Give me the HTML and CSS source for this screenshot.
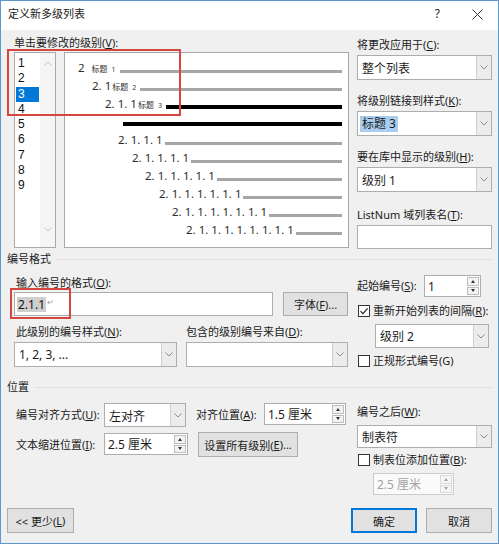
FILE: index.html
```html
<!DOCTYPE html>
<html lang="zh-CN">
<head>
<meta charset="utf-8">
<title>定义新多级列表</title>
<link rel="stylesheet" href="styles.css">
</head>
<body>
<div class="win">
  <div class="titlebar">
    <span class="title">定义新多级列表</span>
    <span class="help">?</span>
    <svg class="close" width="11" height="11" viewBox="0 0 11 11"><path d="M0.5 0.5L10.5 10.5M10.5 0.5L0.5 10.5" stroke="#333" stroke-width="1" fill="none"/></svg>
  </div>

  <div class="top">
    <div class="top-left">
      <div class="lbl">单击要修改的级别(<u>V</u>):</div>
      <div class="lists">
        <div class="levels">
          <div class="lv-items">
            <div class="lv">1</div>
            <div class="lv">2</div>
            <div class="lv sel">3</div>
            <div class="lv">4</div>
            <div class="lv">5</div>
            <div class="lv">6</div>
            <div class="lv">7</div>
            <div class="lv">8</div>
            <div class="lv">9</div>
          </div>
          <div class="lv-scroll">
            <svg width="8" height="5" viewBox="0 0 8 5"><path d="M0.5 4.5L4 1L7.5 4.5" fill="none" stroke="#c2c2c2"/></svg>
            <svg width="8" height="5" viewBox="0 0 8 5"><path d="M0.5 0.5L4 4L7.5 0.5" fill="none" stroke="#c2c2c2"/></svg>
          </div>
        </div>
        <div class="preview">
          <div class="row r1"><span class="num">2</span><span class="hl first">标题<span class="hn">1</span></span><span class="ln"></span></div>
          <div class="row r2"><span class="num">2. 1</span><span class="hl">标题<span class="hn">2</span></span><span class="ln"></span></div>
          <div class="row r3"><span class="num">2. 1. 1</span><span class="hl">标题<span class="hn">3</span></span><span class="ln blk"></span></div>
          <div class="row r4"><span class="ln blk"></span></div>
          <div class="row r5"><span class="num">2. 1. 1. 1</span><span class="ln tight"></span></div>
          <div class="row r6"><span class="num">2. 1. 1. 1. 1</span><span class="ln tight"></span></div>
          <div class="row r7"><span class="num">2. 1. 1. 1. 1. 1</span><span class="ln tight"></span></div>
          <div class="row r8"><span class="num">2. 1. 1. 1. 1. 1. 1</span><span class="ln tight"></span></div>
          <div class="row r9"><span class="num">2. 1. 1. 1. 1. 1. 1. 1</span><span class="ln tight"></span></div>
          <div class="row r10"><span class="num">2. 1. 1. 1. 1. 1. 1. 1. 1</span><span class="ln tight"></span></div>
        </div>
      </div>
    </div>

    <div class="top-right">
      <div class="rfield f1">
        <div class="lbl">将更改应用于(<u>C</u>):</div>
        <div class="dd h25"><span class="dd-text">整个列表</span><span class="dd-btn"><svg width="8" height="5" viewBox="0 0 8 5"><path d="M0.5 0.5L4 4L7.5 0.5" fill="none" stroke="#8a8a8a"/></svg></span></div>
      </div>
      <div class="rfield f2">
        <div class="lbl">将级别链接到样式(<u>K</u>):</div>
        <div class="dd h25"><span class="dd-text"><span class="hilite">标题 3</span></span><span class="dd-btn"><svg width="8" height="5" viewBox="0 0 8 5"><path d="M0.5 0.5L4 4L7.5 0.5" fill="none" stroke="#8a8a8a"/></svg></span></div>
      </div>
      <div class="rfield f3">
        <div class="lbl">要在库中显示的级别(<u>H</u>):</div>
        <div class="dd h25"><span class="dd-text">级别 1</span><span class="dd-btn"><svg width="8" height="5" viewBox="0 0 8 5"><path d="M0.5 0.5L4 4L7.5 0.5" fill="none" stroke="#8a8a8a"/></svg></span></div>
      </div>
      <div class="rfield f4">
        <div class="lbl">ListNum 域列表名(<u>T</u>):</div>
        <div class="txt h24"></div>
      </div>
    </div>
  </div>

  <div class="gtitle g1">编号格式</div>
  <div class="fmt">
    <div class="fmt-left">
      <div class="lbl lbl-a">输入编号的格式(<u>O</u>):</div>
      <div class="inrow">
        <div class="txt fmtinput"><span class="field">2.1.1</span><span class="para">↵</span></div>
        <div class="btn btn-font">字体(<u>F</u>)...</div>
      </div>
      <div class="lblrow">
        <div class="lbl lbl-n">此级别的编号样式(<u>N</u>):</div>
        <div class="lbl">包含的级别编号来自(<u>D</u>):</div>
      </div>
      <div class="selrow">
        <div class="dd sel-n"><span class="dd-text">1, 2, 3, ...</span><span class="dd-btn"><svg width="8" height="5" viewBox="0 0 8 5"><path d="M0.5 0.5L4 4L7.5 0.5" fill="none" stroke="#8a8a8a"/></svg></span></div>
        <div class="dd sel-d"><span class="dd-text"></span><span class="dd-btn"><svg width="8" height="5" viewBox="0 0 8 5"><path d="M0.5 0.5L4 4L7.5 0.5" fill="none" stroke="#8a8a8a"/></svg></span></div>
      </div>
    </div>
    <div class="fmt-right">
      <div class="startrow">
        <span class="lbl start-lbl">起始编号(<u>S</u>):</span>
        <div class="spin start-spin"><span class="spin-text">1</span><span class="spin-btns"><span class="sb up"></span><span class="sb dn"></span></span></div>
      </div>
      <div class="chkrow c1">
        <span class="chk"><svg width="10" height="10" viewBox="0 0 10 10"><path d="M1.5 5.2L4 7.7L8.6 2.3" fill="none" stroke="#222" stroke-width="1.2"/></svg></span>
        <span class="lbl">重新开始列表的间隔(<u>R</u>):</span>
      </div>
      <div class="dd lvl2"><span class="dd-text">级别 2</span><span class="dd-btn"><svg width="8" height="5" viewBox="0 0 8 5"><path d="M0.5 0.5L4 4L7.5 0.5" fill="none" stroke="#8a8a8a"/></svg></span></div>
      <div class="chkrow c2">
        <span class="chk"></span>
        <span class="lbl">正规形式编号(G)</span>
      </div>
    </div>
  </div>

  <div class="gtitle g2">位置</div>
  <div class="pos">
    <div class="pos-left">
      <div class="prow prow1">
        <span class="lbl pl">编号对齐方式(<u>U</u>):</span>
        <div class="dd sel-align"><span class="dd-text low">左对齐</span><span class="dd-btn"><svg width="8" height="5" viewBox="0 0 8 5"><path d="M0.5 0.5L4 4L7.5 0.5" fill="none" stroke="#8a8a8a"/></svg></span></div>
        <span class="lbl pl2">对齐位置(<u>A</u>):</span>
        <div class="spin spin-a"><span class="spin-text">1.5 厘米</span><span class="spin-btns"><span class="sb up"></span><span class="sb dn"></span></span></div>
      </div>
      <div class="prow prow2">
        <span class="lbl pl">文本缩进位置(<u>I</u>):</span>
        <div class="spin spin-i"><span class="spin-text">2.5 厘米</span><span class="spin-btns"><span class="sb up"></span><span class="sb dn"></span></span></div>
        <div class="btn btn-all">设置所有级别(<u>E</u>)...</div>
      </div>
    </div>
    <div class="pos-right">
      <div class="lbl after-lbl">编号之后(<u>W</u>):</div>
      <div class="dd sel-after"><span class="dd-text">制表符</span><span class="dd-btn"><svg width="8" height="5" viewBox="0 0 8 5"><path d="M0.5 0.5L4 4L7.5 0.5" fill="none" stroke="#8a8a8a"/></svg></span></div>
      <div class="chkrow c3">
        <span class="chk"></span>
        <span class="lbl">制表位添加位置(<u>B</u>):</span>
      </div>
      <div class="spin spin-tab disabled"><span class="spin-text">2.5 厘米</span><span class="spin-btns"><span class="sb up"></span><span class="sb dn"></span></span></div>
    </div>
  </div>

  <div class="footer">
    <div class="btn btn-less">&lt;&lt; 更少(<u>L</u>)</div>
    <div class="btn btn-ok">确定</div>
    <div class="btn btn-cancel">取消</div>
  </div>

  <div class="mark mark1"></div>
  <div class="mark mark2"></div>
</div>
</body>
</html>
```

FILE: styles.css
```css
* { box-sizing: border-box; }
html, body { margin: 0; padding: 0; background: #fff; }
body {
  font-family: "Noto Sans", "Noto Sans CJK SC", sans-serif;
  font-size: 11px;
  color: #1b1b1b;
}
u { text-decoration: underline; text-underline-offset: 1px; text-decoration-thickness: 1px; }

.win {
  position: relative;
  width: 499px;
  height: 544px;
  border: 1px solid #5b98cf;
  background: #f0f0f0;
  display: flex;
  flex-direction: column;
  overflow: hidden;
}

/* title bar */
.titlebar {
  flex: none;
  height: 29px;
  background: #fff;
  display: flex;
  align-items: flex-start;
  padding: 6px 15px 0 7px;
}
.title { flex: 1; line-height: 14px; font-size: 11px; }
.help { line-height: 14px; font-size: 12px; margin-right: 32px; color: #222; }
.close { margin-top: 2px; }

.lbl { line-height: 14px; white-space: nowrap; }

/* top area */
.top { display: flex; padding: 0 6px 0 13px; flex: none; }
.top-left { width: 335px; padding-top: 6px; }
.lists { display: flex; gap: 8px; margin-top: 2px; height: 196px; }
.levels {
  width: 42px;
  border: 1px solid #a9a9a9;
  background: #fff;
  display: flex;
}
.lv-items { width: 25px; padding-top: 3px; }
.lv {
  width: 23px;
  margin-left: 1px;
  height: 15.25px;
  line-height: 15.25px;
  padding-left: 2px;
  color: #111;
  font-family: "Liberation Sans", sans-serif;
  font-size: 12px;
}
.lv.sel { background: #0078d7; color: #fff; }
.lv-scroll {
  flex: 1;
  background: #f5f5f5;
  display: flex;
  flex-direction: column;
  justify-content: space-between;
  align-items: center;
  padding: 8px 0 15px;
}

.preview {
  width: 285px;
  border: 1px solid #a9a9a9;
  background: #fff;
  padding: 6px 6px 0 0;
}
.row { height: 18px; display: flex; align-items: center; white-space: nowrap; }
.num { font-size: 11.5px; line-height: 18px; color: #2c2c2c; }
.hl { font-size: 8px; line-height: 10px; color: #333; margin-left: 1px; margin-top: 2px; }
.hl.first { margin-left: 7px; }
.hn { margin-left: 4px; font-size: 7px; }
.ln { flex: 1; height: 3px; margin-top: 6px; margin-left: 4px; background: #a6a6a6; }
.ln.blk { height: 4px; background: #000; }
.ln.tight { margin-left: 2px; }
.r1 { padding-left: 13px; }
.r2 { padding-left: 27px; }
.r3 { padding-left: 40px; }
.r4 { padding-left: 58px; }
.r4 .ln { margin-left: 0; margin-top: 4px; }
.r5 { padding-left: 53px; }
.r6 { padding-left: 67px; }
.r7 { padding-left: 80px; }
.r8 { padding-left: 94px; }
.r9 { padding-left: 107px; }
.r10 { padding-left: 121px; }

.top-right { width: 135px; margin-left: 8px; padding-top: 8px; }
.rfield .lbl { margin-bottom: 3px; }
.f2 { margin-top: 14px; }
.f3 { margin-top: 14px; }
.f4 { margin-top: 16px; }

/* controls */
.dd {
  display: flex;
  height: 25px;
  background: #fff;
  border: 1px solid #adadad;
}
.dd-text { flex: 1; padding-left: 4px; display: flex; align-items: center; white-space: nowrap; overflow: hidden; font-size: 12px; }
.dd-text.low { padding-top: 2px; }
.dd-btn {
  width: 15px;
  border-left: 1px solid #cfcfcf;
  background: #ececec;
  display: flex;
  align-items: center;
  justify-content: center;
}
.h25 { height: 25px; }
.h24 { height: 24px; }
.hilite { background: #a9cdee; padding: 0 2px; margin-left: -2px; line-height: 16px; }

.txt { background: #fff; border: 1px solid #adadad; }

.spin {
  display: flex;
  height: 22px;
  background: #fff;
  border: 1px solid #adadad;
}
.spin-text { flex: 1; padding-left: 3px; display: flex; align-items: center; white-space: nowrap; font-size: 12px; }
.spin-btns { width: 13px; display: flex; flex-direction: column; gap: 1px; padding: 1px 1px 1px 0; }
.sb {
  flex: 1;
  border: 1px solid #bdbdbd;
  background: #f2f2f2;
  display: flex;
  align-items: center;
  justify-content: center;
}
.sb::before { content: ""; width: 0; height: 0; border-left: 2.5px solid transparent; border-right: 2.5px solid transparent; }
.sb.up::before { border-bottom: 3px solid #333; }
.sb.dn::before { border-top: 3px solid #333; }
.spin.disabled { border-color: #cccccc; background: #fafafa; }
.spin.disabled .spin-text { color: #a2a2a2; }
.spin.disabled .sb { border-color: #dadada; background: #f6f6f6; }
.spin.disabled .sb.up::before { border-bottom-color: #a8a8a8; }
.spin.disabled .sb.dn::before { border-top-color: #a8a8a8; }

.btn {
  height: 25px;
  background: #e1e1e1;
  border: 1px solid #adadad;
  display: flex;
  align-items: center;
  justify-content: center;
  white-space: nowrap;
  color: #1b1b1b;
}

.chk {
  width: 12px;
  height: 12px;
  border: 1px solid #333;
  background: #fff;
  display: flex;
  align-items: center;
  justify-content: center;
  margin-left: 1px;
  margin-right: 3px;
}
.chkrow { display: flex; align-items: center; height: 14px; }

/* group titles */
.gtitle {
  display: flex;
  align-items: center;
  line-height: 14px;
  padding: 0 6px;
  white-space: nowrap;
}
.gtitle::after { content: ""; flex: 1; height: 1px; background: #e0e0e0; margin-left: 6px; }
.g1 { margin-top: 3px; }
.g2 { margin-top: 12px; }

/* numbering format */
.fmt { display: flex; padding: 0 6px 0 13px; }
.fmt-left { width: 335px; }
.lbl-a { margin-top: 10px; padding-left: 2px; }
.inrow { display: flex; gap: 10px; margin-top: 2px; height: 24px; }
.fmtinput { width: 259px; display: flex; align-items: center; padding-left: 2px; }
.field { background: #cfcfcf; line-height: 15px; padding: 0 1px; color: #111; font-size: 12px; }
.para { font-size: 8px; color: #9a9a9a; margin-left: 1px; margin-top: -5px; }
.btn-font { width: 65px; height: 24px; }
.lblrow { display: flex; margin-top: 9px; }
.lbl-n { width: 172px; padding-left: 2px; }
.selrow { display: flex; gap: 9px; margin-top: 3px; }
.sel-n { width: 163px; }
.sel-d { width: 162px; }

.fmt-right { width: 135px; margin-left: 8px; }
.startrow { display: flex; align-items: center; margin-top: 9px; height: 22px; }
.start-lbl { width: 67px; }
.start-spin { width: 57px; }
.c1 { margin-top: 7px; }
.lvl2 { width: 114px; height: 24px; margin: 6px 0 0 18px; }
.c2 { margin-top: 6px; }

/* position */
.pos { display: flex; padding: 0 6px 0 13px; }
.pos-left { width: 335px; }
.prow { display: flex; align-items: flex-start; }
.prow1 { margin-top: 9px; height: 24px; }
.prow2 { margin-top: 5px; height: 25px; }
.pl { width: 90px; padding-left: 2px; align-self: center; }
.pl2 { width: 68px; margin-left: 10px; align-self: center; }
.sel-align { width: 82px; height: 24px; }
.spin-a { width: 82px; }
.spin-i { width: 84px; margin-top: 1px; }
.btn-all { width: 100px; margin-left: 10px; }

.pos-right { width: 135px; margin-left: 8px; }
.after-lbl { margin-top: 11px; }
.sel-after { height: 23px; margin-top: 6px; }
.c3 { margin-top: 5px; }
.spin-tab { width: 81px; margin: 6px 0 0 16px; }

/* footer */
.footer { margin-top: auto; display: flex; padding: 0 6px 10px; }
.btn-less { width: 67px; }
.btn-ok { width: 66px; margin-left: auto; border-color: #0078d7; box-shadow: inset 0 0 0 1px #0078d7; }
.btn-cancel { width: 66px; margin-left: 9px; }

/* red annotation boxes */
.mark { position: absolute; border: 2px solid #d4463f; }
.mark1 { left: 6px; top: 48px; width: 174px; height: 67px; }
.mark2 { left: 9px; top: 287px; width: 61px; height: 31px; }
```
